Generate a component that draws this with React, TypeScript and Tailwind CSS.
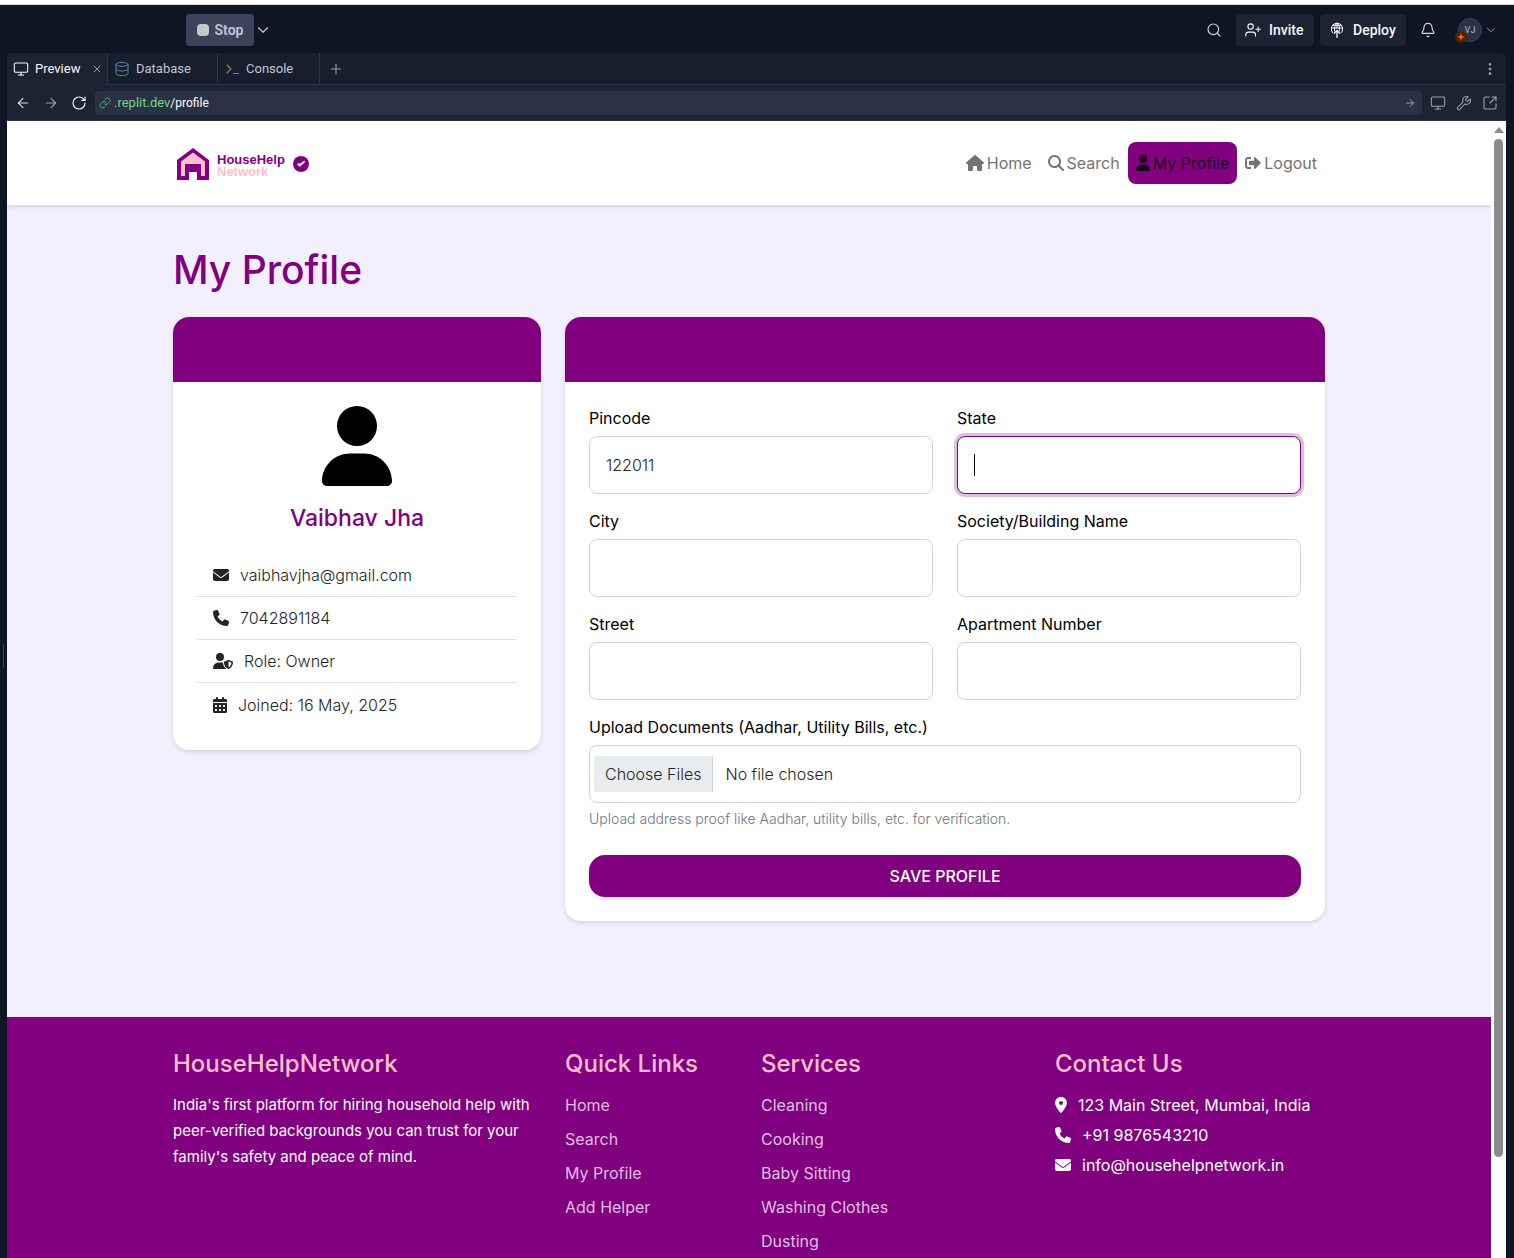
import type { ReactNode } from 'react';
import {
  ArrowLeft,
  ArrowRight,
  Bell,
  ChevronDown,
  Database,
  EllipsisVertical,
  Link as LinkIcon,
  Monitor,
  Plus,
  RotateCw,
  Search,
  SquareArrowOutUpRight,
  Wrench,
  X,
} from 'lucide-react';
import {
  FaCalendarDays,
  FaEnvelope,
  FaHouse,
  FaLocationDot,
  FaMagnifyingGlass,
  FaPhone,
  FaUser,
  FaUserShield,
} from 'react-icons/fa6';
import { FaSignOutAlt } from 'react-icons/fa';

function InviteIcon() {
  return (
    <svg viewBox="0 0 16 16" className="size-4" fill="none" stroke="currentColor" strokeWidth="1.1" strokeLinecap="round" aria-hidden="true">
      <circle cx="5.6" cy="4.6" r="2.7" />
      <path d="M0.8 14v-1.2c0-1.6 1.2-2.7 2.7-2.7h4.3c1.5 0 2.7 1.1 2.7 2.7V14M13.2 5v4.6M10.9 7.3h4.6" />
    </svg>
  );
}

function DeployIcon() {
  return (
    <svg viewBox="0 0 16 16" className="size-4" fill="none" stroke="currentColor" strokeWidth="1" strokeLinecap="round" aria-hidden="true">
      <path d="M3.6 10.6A5.7 5.7 0 1 1 12.4 10.6" />
      <path d="M5.7 9.2C4.9 6.500 5.8 2.500 8 1.200C10.200 2.500 11.100 6.500 10.300 9.200" />
      <path d="M2.400 6h11.200M3.600 3.300h8.800M8 1.200V6" />
      <path d="M8 8.500V15.500M5.300 11.200L8 8.500L10.700 11.200" strokeWidth="1.300" />
    </svg>
  );
}

function HouseLogo() {
  return (
    <svg viewBox="0 0 32 32" className="size-8" aria-hidden="true">
      <path fill="#800080" d="M16 0L32 12V32H20V24H12V32H0V12Z" />
      <path fill="#ffc0cb" d="M16 4.500L28 13.500V28H24V16H8V28H4V13.500Z" />
    </svg>
  );
}

function VerifiedBadge() {
  return (
    <svg viewBox="0 0 16 16" className="ml-2 size-4" aria-hidden="true">
      <circle cx="8" cy="8" r="8" fill="#800080" />
      <path d="M4 8.600L5.600 7.200L7.200 7.600L11.200 4.800L12.300 5.800L7 10.800Z" fill="#fff" />
    </svg>
  );
}

function TopBar() {
  return (
    <header className="flex h-12 shrink-0 items-center bg-[#0e1525] pt-0.5 pr-4 pl-[186px]">
      <button className="flex h-8 w-[68px] items-center justify-center gap-1.5 rounded-sm bg-[#3c445c] text-sm font-semibold text-[#c2c8cc]">
        <span className="size-3 rounded-sm bg-[#c2c8cc]" />
        Stop
      </button>
      <button aria-label="Run options" className="text-[#c2c8cc]">
        <ChevronDown className="size-[18px]" strokeWidth={1.6} />
      </button>
      <div className="ml-auto flex items-center text-sm font-medium text-[#f5f9fc]">
        <button aria-label="Search" className="mr-3.5 text-[#d5dbe0]">
          <Search className="size-4" strokeWidth={1.7} />
        </button>
        <button className="mr-1.5 flex h-8 w-[78px] items-center gap-2 rounded-sm bg-[#1c2333] px-[9px]">
          <InviteIcon />
          Invite
        </button>
        <button className="flex h-8 w-[86px] items-center gap-2 rounded-sm bg-[#1c2333] px-[9px]">
          <DeployIcon />
          Deploy
        </button>
        <button aria-label="Notifications" className="ml-3.5 text-[#d5dbe0]">
          <Bell className="size-4" strokeWidth={1.7} />
        </button>
        <button aria-label="Account" className="ml-[22px] flex items-center gap-0.5 text-[#9da2a6]">
          <span className="relative flex size-6 items-center justify-center rounded-full border border-[#3c445c] bg-[#2b3245] text-[9px]">
            VJ
            <span className="absolute -bottom-0.5 -left-1 flex size-3 items-center justify-center rounded-full bg-[#4a2305] text-[#ff6a13]">
              <svg viewBox="0 0 8 8" className="size-2" fill="currentColor" aria-hidden="true">
                <path d="M4 0L5 3L8 4L5 5L4 8L3 5L0 4L3 3Z" />
              </svg>
            </span>
          </span>
          <ChevronDown className="size-3.5" strokeWidth={1.6} />
        </button>
      </div>
    </header>
  );
}

function TabBar() {
  return (
    <div role="tablist" className="flex h-8 shrink-0 items-stretch rounded-t bg-[#171e2d] text-[13px] text-[#c2c8cc]">
      <button role="tab" aria-selected="true" className="flex w-[101px] items-center rounded-tl border-r border-[#2b3245] bg-[#1c2333] pl-1.5 text-[#f5f9fc]">
        <Monitor className="mr-1.5 size-4" strokeWidth={1.6} />
        Preview
        <X className="mr-1 ml-auto size-3 text-[#9da2a6]" />
      </button>
      <button role="tab" aria-selected="false" className="flex w-[110px] items-center border-r border-b border-[#2b3245] pl-1.5">
        <Database className="mr-1.5 size-4 text-[#6081a8]" strokeWidth={1.5} />
        Database
      </button>
      <button role="tab" aria-selected="false" className="flex w-[102px] items-center border-r border-b border-[#2b3245] pl-2">
        <svg viewBox="0 0 14 14" className="mr-1.5 size-3.5" fill="none" stroke="#8f8352" strokeWidth="1.2" strokeLinecap="round" aria-hidden="true">
          <path d="M1 3L5 7L1 11M7.500 11.500H12.500" />
        </svg>
        Console
      </button>
      <div className="flex grow items-center justify-between border-b border-[#2b3245] px-2">
        <button aria-label="New tab">
          <Plus className="size-4 text-[#9da2a6]" strokeWidth={1.6} />
        </button>
        <button aria-label="Pane options">
          <EllipsisVertical className="size-4 text-[#9da2a6]" />
        </button>
      </div>
    </div>
  );
}

function AddressBar() {
  return (
    <div className="flex h-9 shrink-0 items-center border-b border-[#2b3245] bg-[#1c2333] px-2 text-[#9da2a6]">
      <button aria-label="Back" className="text-[#d5dbe0]">
        <ArrowLeft className="size-4" strokeWidth={1.6} />
      </button>
      <button aria-label="Forward" className="ml-3">
        <ArrowRight className="size-4" strokeWidth={1.6} />
      </button>
      <button aria-label="Reload" className="ml-3 text-[#f5f9fc]">
        <RotateCw className="size-4" strokeWidth={1.7} />
      </button>
      <div className="mx-2 flex h-6 grow items-center rounded bg-[#2b3245] pr-1.5 pl-1">
        <LinkIcon className="mr-[3px] size-3 text-[#4aa868]" />
        <a href="#profile" className="text-xs text-white">
          <span className="text-[13px] text-[#6cd97e]">.replit.dev</span>/profile
        </a>
        <ArrowRight className="ml-auto size-3" />
      </div>
      <div className="flex gap-2.5">
        <button aria-label="Device size">
          <Monitor className="size-4" strokeWidth={1.6} />
        </button>
        <button aria-label="Developer tools">
          <Wrench className="size-4" strokeWidth={1.6} />
        </button>
        <button aria-label="Open in new tab">
          <SquareArrowOutUpRight className="size-4" strokeWidth={1.6} />
        </button>
      </div>
    </div>
  );
}

function NavLink({ icon, label, active = false }: { icon: ReactNode; label: string; active?: boolean }) {
  return (
    <a
      href={`#${label}`}
      aria-current={active ? 'page' : undefined}
      className={
        active
          ? 'flex h-[42px] items-center gap-[3px] rounded-lg bg-[#800080] px-2 text-[#1a001a]'
          : 'flex h-[42px] items-center gap-[3px] px-2 text-[#737373]'
      }
    >
      {icon}
      {label}
    </a>
  );
}

function SiteNav() {
  return (
    <nav className="relative flex h-[84px] items-center bg-white px-4 shadow-[0_2px_4px_rgba(0,0,0,0.12)]">
      <div className="mx-auto flex w-full max-w-[1152px] items-center justify-between">
        <a href="#home" className="flex items-center pt-0.5 pl-1">
          <HouseLogo />
          <span className="ml-2 pt-1 font-['Liberation_Sans',sans-serif] text-[13px] leading-3 font-bold text-[#800080]">
            HouseHelp
            <br />
            <span className="text-[#ffc0cb]">Network</span>
          </span>
          <VerifiedBadge />
        </a>
        <div className="flex text-base">
          <NavLink icon={<FaHouse className="h-4 w-[18px]" />} label="Home" />
          <NavLink icon={<FaMagnifyingGlass className="size-4" />} label="Search" />
          <NavLink icon={<FaUser className="h-4 w-3.5" />} label="My Profile" active />
          <NavLink icon={<FaSignOutAlt className="size-4" />} label="Logout" />
        </div>
      </div>
    </nav>
  );
}

function Card({ className, children }: { className: string; children: ReactNode }) {
  return (
    <section className={`overflow-hidden rounded-2xl bg-white shadow-[0_2px_4px_rgba(0,0,0,0.12)] ${className}`}>
      <div className="h-[65px] bg-[#800080]" />
      <div className="p-6">{children}</div>
    </section>
  );
}

const details = [
  { icon: <FaEnvelope className="mr-[11px] size-4" />, text: 'vaibhavjha@gmail.com' },
  { icon: <FaPhone className="mr-[11px] size-4" />, text: '7042891184' },
  { icon: <FaUserShield className="mr-[11px] h-4 w-5" />, text: 'Role: Owner' },
  { icon: <FaCalendarDays className="mr-[11px] h-4 w-3.5" />, text: 'Joined: 16 May, 2025' },
];

function ProfileCard() {
  return (
    <Card className="col-span-4">
      <FaUser className="mx-auto h-20 w-[70px] text-black" />
      <h2 className="mt-4 text-center text-[23px] leading-8 font-medium text-[#800080]">Vaibhav Jha</h2>
      <ul className="mt-5 divide-y divide-[#dee2e6] font-light text-[#212529]">
        {details.map((d) => (
          <li key={d.text} className="flex h-[43px] items-center px-4 text-base">
            {d.icon}
            {d.text}
          </li>
        ))}
      </ul>
    </Card>
  );
}

function Field({ id, label, value, focused = false }: { id: string; label: string; value?: string; focused?: boolean }) {
  return (
    <div>
      <label htmlFor={id} className="mb-1.5 block leading-6 text-black">
        {label}
      </label>
      <div className="relative">
        <input
          id={id}
          type="text"
          defaultValue={value}
          className={
            focused
              ? 'block h-[58px] w-full rounded-lg border border-[#800080] bg-white px-4 font-light text-[#212529] caret-transparent ring-3 ring-[#800080]/25 outline-none'
              : 'block h-[58px] w-full rounded-lg border border-[#ced4da] bg-white px-4 font-light text-[#212529] outline-none'
          }
        />
        {focused && <span className="absolute top-[18px] left-[17px] h-[22px] w-px bg-black" />}
      </div>
    </div>
  );
}

function AddressForm() {
  return (
    <Card className="col-span-8">
      <form onSubmit={(e) => e.preventDefault()}>
        <div className="grid grid-cols-2 gap-x-6 gap-y-[15px]">
          <Field id="pincode" label="Pincode" value="122011" />
          <Field id="state" label="State" focused />
          <Field id="city" label="City" />
          <Field id="society" label="Society/Building Name" />
          <Field id="street" label="Street" />
          <Field id="apartment" label="Apartment Number" />
          <div className="col-span-2">
            <label htmlFor="documents" className="mb-1.5 block leading-6 text-black">
              Upload Documents (Aadhar, Utility Bills, etc.)
            </label>
            <input
              id="documents"
              type="file"
              multiple
              className="block h-[58px] w-full rounded-lg border border-[#ced4da] bg-white px-1 py-2.5 font-light text-[#212529] file:mr-3 file:h-9 file:border-r file:border-[#ced4da] file:bg-[#e9ecef] file:px-[11px] file:font-light file:text-[#212529]"
            />
            <p className="mt-1 text-sm leading-6 font-light text-[#6c757d]">
              Upload address proof like Aadhar, utility bills, etc. for verification.
            </p>
          </div>
        </div>
        <button
          type="submit"
          className="mt-6 h-[42px] w-full rounded-2xl bg-[#800080] text-base font-medium text-white uppercase shadow-[0_2px_4px_rgba(0,0,0,0.12)]"
        >
          Save Profile
        </button>
      </form>
    </Card>
  );
}

function FooterHeading({ children }: { children: ReactNode }) {
  return <h3 className="mb-3 text-2xl leading-8 font-medium text-[#ffc0cb]">{children}</h3>;
}

function FooterLinks({ title, links, className }: { title: string; links: string[]; className: string }) {
  return (
    <div className={className}>
      <FooterHeading>{title}</FooterHeading>
      <ul className="text-[#e0bfe0]">
        {links.map((l) => (
          <li key={l} className="mb-2 leading-[26px]">
            <a href={`#${l}`}>{l}</a>
          </li>
        ))}
      </ul>
    </div>
  );
}

function SiteFooter() {
  return (
    <footer className="bg-[#800080] px-4 pt-[31px] pb-12 text-base text-white">
      <div className="mx-auto grid max-w-[1152px] grid-cols-12 gap-6">
        <div className="col-span-4">
          <FooterHeading>HouseHelpNetwork</FooterHeading>
          <p className="text-[15px] leading-[26px]">
            India's first platform for hiring household help with peer-verified backgrounds you can trust for your family's safety and peace of mind.
          </p>
        </div>
        <FooterLinks className="col-span-2" title="Quick Links" links={['Home', 'Search', 'My Profile', 'Add Helper']} />
        <FooterLinks className="col-span-3" title="Services" links={['Cleaning', 'Cooking', 'Baby Sitting', 'Washing Clothes', 'Dusting']} />
        <address className="col-span-3 not-italic">
          <FooterHeading>Contact Us</FooterHeading>
          <p className="mb-1 flex items-center leading-[26px]">
            <FaLocationDot className="mr-[11px] h-4 w-3" />
            123 Main Street, Mumbai, India
          </p>
          <p className="mb-1 flex items-center leading-[26px]">
            <FaPhone className="mr-[11px] size-4" />
            +91 9876543210
          </p>
          <p className="flex items-center leading-[26px]">
            <FaEnvelope className="mr-[11px] size-4" />
            info@househelpnetwork.in
          </p>
        </address>
      </div>
    </footer>
  );
}

function ScrollTrack() {
  return (
    <div className="flex w-[15px] shrink-0 flex-col items-center bg-[#fcfcfc] pt-1.5">
      <svg viewBox="0 0 10 6" className="mb-1.5 h-1.5 w-2.5 shrink-0" fill="#8b8b8b" aria-hidden="true">
        <path d="M5 0L10 6H0Z" />
      </svg>
      <div className="h-[90%] w-[9px] rounded-full bg-[#8b8b8b]" />
    </div>
  );
}

export default function App() {
  return (
    <div className="flex h-screen flex-col overflow-hidden bg-[#0e1525] font-[Roboto,sans-serif]">
      <div className="h-[5px] shrink-0 border-b border-[#d9d9d9] bg-white" />
      <TopBar />
      <div className="flex min-h-0 grow pr-2">
        <div className="flex w-[7px] shrink-0 items-center justify-center">
          <div className="h-6 w-px bg-[#3c445c]" />
        </div>
        <div className="flex min-w-0 grow flex-col">
          <TabBar />
          <AddressBar />
          <div className="flex min-h-0 grow font-[Inter,sans-serif]">
            <div className="min-w-0 grow overflow-hidden bg-[#f2f0ff]">
              <SiteNav />
              <main className="px-4 pt-10 pb-24">
                <div className="mx-auto max-w-[1152px]">
                  <h1 className="mb-[22px] text-[39px] leading-[50px] font-medium text-[#800080]">My Profile</h1>
                  <div className="grid grid-cols-12 items-start gap-6">
                    <ProfileCard />
                    <AddressForm />
                  </div>
                </div>
              </main>
              <SiteFooter />
            </div>
            <ScrollTrack />
          </div>
        </div>
      </div>
    </div>
  );
}
